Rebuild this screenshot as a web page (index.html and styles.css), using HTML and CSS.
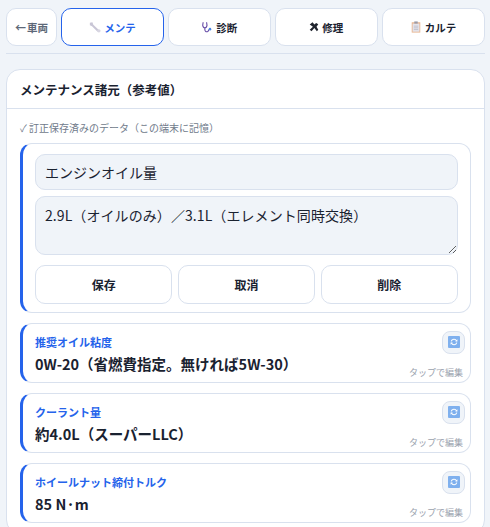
FILE: index.html
```html
<!DOCTYPE html>
<html lang="ja">
<head>
<meta charset="utf-8">
<title>メンテナンス諸元</title>
<link rel="stylesheet" href="styles.css">
</head>
<body>
<nav class="tabs">
  <button class="tab back"><span class="arrow">←</span>車両</button>
  <button class="tab active">
    <svg class="ico" viewBox="0 0 14 14"><path d="M1 2 L4 1.5 L5 4.5 L11.5 10.5 L10 12.5 L3.5 6 L1 5 Z" fill="#c9c6d6"/><circle cx="11.5" cy="11.5" r="2" fill="#d8d6e2"/></svg>
    メンテ</button>
  <button class="tab">
    <svg class="ico" viewBox="0 0 14 14" fill="none"><path d="M2.5 1.5 L2 5 Q2.5 8 4.5 8 Q6.5 8 7 5 L6.5 1.5 M4.5 8 L4.5 10.5 Q5 13 7.5 12.5 Q9 12 9 10" stroke="#6a4fa8" stroke-width="1.3"/><circle cx="10.5" cy="9.5" r="1.5" fill="#4a83e0"/></svg>
    診断</button>
  <button class="tab">
    <svg class="ico small" viewBox="0 0 14 14"><path d="M1 3.5 L5 0.5 L7.5 3.5 L10 1.5 L13 3 L10.5 6.5 L13 11 L11 13 L7.5 8.5 L3.5 13 L1 11 L5.5 6.5 Z" fill="#20242e"/></svg>
    修理</button>
  <button class="tab">
    <svg class="ico" viewBox="0 0 14 14"><rect x="2" y="1.5" width="10" height="12" fill="#e8b48e"/><rect x="3" y="3" width="8" height="9.5" fill="#e4e4ec"/><rect x="5" y="0.5" width="4" height="2.5" fill="#9a9aa6"/><path d="M4.5 6h5M4.5 8h5M4.5 10h5" stroke="#b4b4c2" stroke-width=".8"/></svg>
    カルテ</button>
</nav>

<section class="card">
  <h2 class="card-title">メンテナンス諸元（参考値）</h2>
  <div class="card-body">
    <p class="note">✓ 訂正保存済みのデータ（この端末に記憶）</p>

    <div class="item editing">
      <input class="field" type="text" value="エンジンオイル量">
      <textarea class="field area">2.9L（オイルのみ）／3.1L（エレメント同時交換）</textarea>
      <div class="actions">
        <button class="act">保存</button>
        <button class="act">取消</button>
        <button class="act">削除</button>
      </div>
    </div>

    <div class="item spec">
      <div class="label">推奨オイル粘度</div>
      <div class="value">0W-20（省燃費指定。無ければ5W-30）</div>
      <button class="reset"><svg viewBox="0 0 12 12"><rect width="12" height="12" rx="1" fill="#7fb0ee"/><path d="M3.2 5.4 A2.9 2.9 0 0 1 8.6 4.9 M8.8 6.6 A2.9 2.9 0 0 1 3.4 7.1" fill="none" stroke="#fff" stroke-width="1.1"/><path d="M9.4 3.2 V5.4 H7.2 Z M2.6 8.8 V6.6 H4.8 Z" fill="#fff"/></svg></button>
      <span class="hint">タップで編集</span>
    </div>

    <div class="item spec">
      <div class="label">クーラント量</div>
      <div class="value">約4.0L（スーパーLLC）</div>
      <button class="reset"><svg viewBox="0 0 12 12"><rect width="12" height="12" rx="1" fill="#7fb0ee"/><path d="M3.2 5.4 A2.9 2.9 0 0 1 8.6 4.9 M8.8 6.6 A2.9 2.9 0 0 1 3.4 7.1" fill="none" stroke="#fff" stroke-width="1.1"/><path d="M9.4 3.2 V5.4 H7.2 Z M2.6 8.8 V6.6 H4.8 Z" fill="#fff"/></svg></button>
      <span class="hint">タップで編集</span>
    </div>

    <div class="item spec">
      <div class="label">ホイールナット締付トルク</div>
      <div class="value">85 N·m</div>
      <button class="reset"><svg viewBox="0 0 12 12"><rect width="12" height="12" rx="1" fill="#7fb0ee"/><path d="M3.2 5.4 A2.9 2.9 0 0 1 8.6 4.9 M8.8 6.6 A2.9 2.9 0 0 1 3.4 7.1" fill="none" stroke="#fff" stroke-width="1.1"/><path d="M9.4 3.2 V5.4 H7.2 Z M2.6 8.8 V6.6 H4.8 Z" fill="#fff"/></svg></button>
      <span class="hint">タップで編集</span>
    </div>
  </div>
</section>
</body>
</html>
```

FILE: styles.css
```css
* { box-sizing: border-box; }
html, body { height: 100%; overflow: hidden; }
body {
  margin: 0;
  padding: 8px 5.5px 0 6px;
  background: #f0f4f9;
  color: #1a2230;
  font-family: "Noto Sans CJK JP", "Noto Sans", sans-serif;
}
button, input, textarea { font-family: inherit; color: inherit; }

.tabs {
  display: grid;
  grid-template-columns: 51px repeat(4, 1fr);
  gap: 4px;
  padding-bottom: 7px;
  border-bottom: 1px solid #d9e1ee;
  margin-bottom: 15px;
}
.tab {
  height: 38px;
  padding: 0;
  display: flex;
  align-items: center;
  justify-content: center;
  gap: 3px;
  background: #fff;
  border: 1px solid #d9e1ee;
  border-radius: 10px;
  font-size: 10.5px;
  font-weight: 700;
}
.tab.active { border-color: #2563eb; color: #2563eb; }
.tab.back { color: #5d6878; font-weight: 700; gap: 1px; }
.arrow { font-size: 11px; }
.ico { width: 12px; height: 12px; flex: none; }
.ico.small { width: 10px; height: 10px; }

.card {
  background: #fff;
  border: 1px solid #d9e1ee;
  border-radius: 14px;
  width: 479px;
}
.card-title {
  margin: 0;
  height: 39px;
  padding: 0 13px;
  display: flex;
  align-items: center;
  font-size: 12.5px;
  font-weight: 700;
  border-bottom: 1px solid #d9e1ee;
}
.card-body { padding: 12px 13px 0 13px; }
.note {
  margin: 0 0 9px;
  height: 13px;
  line-height: 13px;
  font-size: 10px;
  color: #6f7a8a;
}
.item {
  background: #fff;
  border: 1px solid #d9e1ee;
  border-left: 3px solid #2563eb;
  border-radius: 12px;
  margin-bottom: 10px;
}
.editing {
  height: 170px;
  padding: 10px 12px 8px;
  display: flex;
  flex-direction: column;
  gap: 6px;
}
.field {
  display: block;
  width: 100%;
  background: #f0f4f9;
  border: 1px solid #d9e1ee;
  border-radius: 10px;
  padding: 0 9px;
  font-size: 14px;
  height: 36px;
  outline: none;
}
.field.area {
  height: 59px;
  padding: 7px 9px;
  line-height: 22px;
  letter-spacing: 0.08px;
  resize: vertical;
}
.actions {
  display: grid;
  grid-template-columns: repeat(3, 1fr);
  gap: 5.5px;
  margin-top: 4px;
}
.act {
  height: 39px;
  background: #fff;
  border: 1px solid #d9e1ee;
  border-radius: 10px;
  font-size: 12px;
  font-weight: 700;
}
.spec {
  position: relative;
  height: 60px;
  padding: 10px 12px;
}
.label {
  font-size: 11px;
  line-height: 16px;
  font-weight: 700;
  color: #2563eb;
}
.value {
  margin-top: 4px;
  font-size: 14.5px;
  line-height: 20px;
  font-weight: 700;
}
.reset {
  position: absolute;
  top: 6.5px;
  right: 5px;
  width: 23px;
  height: 23px;
  padding: 0;
  display: flex;
  align-items: center;
  justify-content: center;
  background: #f0f4f9;
  border: 1px solid #d9e1ee;
  border-radius: 8px;
}
.reset svg { width: 12px; height: 12px; }
.hint {
  position: absolute;
  right: 7px;
  bottom: 3px;
  font-size: 9px;
  line-height: 13px;
  color: #9aa2ae;
}
```
